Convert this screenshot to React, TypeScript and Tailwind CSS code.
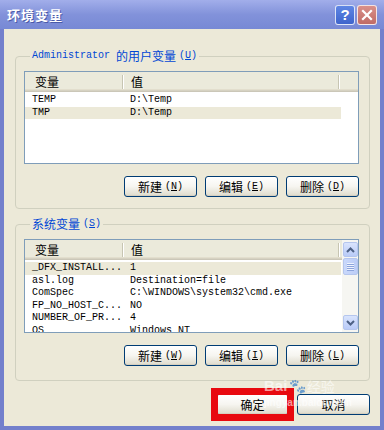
// 环境变量 dialog (Windows XP style)
const mono = "font-['Liberation_Mono','DejaVu_Sans_Mono',monospace] text-[10px]";
const cjk = "font-['Noto_Sans_CJK_SC','Noto_Sans',sans-serif]";

const USER_VARS = [
  { name: "TEMP", value: "D:\\Temp" },
  { name: "TMP", value: "D:\\Temp", selected: true },
];

const SYS_VARS = [
  { name: "_DFX_INSTALL...", value: "1", selected: true },
  { name: "asl.log", value: "Destination=file" },
  { name: "ComSpec", value: "C:\\WINDOWS\\system32\\cmd.exe" },
  { name: "FP_NO_HOST_C...", value: "NO" },
  { name: "NUMBER_OF_PR...", value: "4" },
  { name: "OS", value: "Windows_NT" },
];

function Mnemonic({ k }: { k: string }) {
  return (
    <span className={`${mono} ml-[3px] leading-none`}>
      (<span className="underline underline-offset-[1px]">{k}</span>)
    </span>
  );
}

function XpButton({ label, k }: { label: string; k?: string }) {
  return (
    <button className="flex h-[21px] w-[73px] items-center justify-center rounded-[3px] border border-[#003c74] bg-gradient-to-b from-white via-[#f6f5f0] to-[#dedbcc] text-[12px] leading-none text-black shadow-[inset_0_-1px_0_#d6d0c0]">
      <span className={`${cjk} leading-none`}>{label}</span>
      {k && <Mnemonic k={k} />}
    </button>
  );
}

function Divider() {
  return <span className="h-[14px] w-[2px] border-l border-r border-l-[#c7c5b2] border-r-white" />;
}

function ListHeader() {
  return (
    <div className="flex h-[20px] shrink-0 items-center bg-[#ebeadb] shadow-[inset_0_-1px_0_#cbc7b8,inset_0_-2px_0_#d6d2c2,inset_0_-3px_0_#e2decd]">
      <span className={`${cjk} w-[97px] pl-[10px] text-[12px] leading-[20px] text-black`}>变量</span>
      <Divider />
      <span className={`${cjk} w-[214px] pl-[7px] text-[12px] leading-[20px] text-black`}>值</span>
      <Divider />
    </div>
  );
}

function Rows({ rows }: { rows: { name: string; value: string; selected?: boolean }[] }) {
  return (
    <div className="flex flex-col pt-[2px]">
      {rows.map((r) => (
        <div
          key={r.name}
          className={`flex h-[12.5px] w-[316px] shrink-0 items-center ${mono} leading-[12.5px] text-black ${
            r.selected ? "bg-[#ece9d8]" : ""
          }`}
        >
          <span className="w-[99px] whitespace-pre pl-[7px]">{r.name}</span>
          <span className="whitespace-pre pl-[6px]">{r.value}</span>
        </div>
      ))}
    </div>
  );
}

function ScrollBtn({ up }: { up?: boolean }) {
  return (
    <div className="flex h-[15px] w-[15px] shrink-0 items-center justify-center rounded-[2px] border border-[#b5c6ee] bg-gradient-to-b from-[#d9e4fd] to-[#b9cbf7]">
      <svg width="9" height="6" viewBox="0 0 9 6">
        <path
          d={up ? "M1 5 L4.5 1.5 L8 5" : "M1 1 L4.5 4.5 L8 1"}
          fill="none"
          stroke="#4d6185"
          strokeWidth="2"
        />
      </svg>
    </div>
  );
}

function Scrollbar() {
  return (
    <div className="flex w-[16px] shrink-0 flex-col items-center bg-[#f6f6f2] py-[2px]">
      <ScrollBtn up />
      <div className="mt-[1px] flex h-[17px] w-[15px] flex-col items-center justify-center gap-[1px] rounded-[2px] border border-[#b5c6ee] bg-gradient-to-r from-[#c9d8fb] to-[#bccdf7]">
        {[0, 1, 2, 3].map((i) => (
          <span key={i} className="h-[1px] w-[7px] bg-[#eef3fe] shadow-[0_1px_0_#8ca4dc]" />
        ))}
      </div>
      <div className="flex-1" />
      <ScrollBtn />
    </div>
  );
}

function Group({
  title,
  children,
  className,
}: {
  title: React.ReactNode;
  children: React.ReactNode;
  className?: string;
}) {
  return (
    <fieldset className={`rounded-[4px] border border-[#d0d0bf] pl-[8px] pr-[10px] ${className || ""}`}>
      <legend className="ml-[6px] flex h-[14px] items-center overflow-visible px-[2px] text-[12px] leading-none text-[#0046d5]">
        {title}
      </legend>
      {children}
    </fieldset>
  );
}

export default function App() {
  return (
    <div className="relative flex h-[430px] w-[384px] flex-col overflow-hidden bg-[#7380cc]">
      {/* title bar */}
      <div className="flex h-[29px] shrink-0 items-center bg-gradient-to-b from-[#a2aeea] via-[#8292da] to-[#7789d5] pl-[7px] pr-[7px]">
        <span className={`${cjk} text-[13px] font-bold tracking-[1px] text-white [text-shadow:1px_1px_0_#4a5aa8]`}>
          环境变量
        </span>
        <div className="ml-auto flex gap-[2px]">
          <div className="flex h-[20px] w-[20px] items-center justify-center rounded-[3px] border border-white/80 bg-gradient-to-b from-[#5f86e4] to-[#3e64cc]">
            <span className="font-['Liberation_Sans',sans-serif] text-[15px] font-bold leading-none text-white">?</span>
          </div>
          <div className="flex h-[20px] w-[20px] items-center justify-center rounded-[3px] border border-white/80 bg-gradient-to-b from-[#d9908a] to-[#c06c66]">
            <svg width="12" height="12" viewBox="0 0 12 12">
              <path d="M2 2 L10 10 M10 2 L2 10" stroke="white" strokeWidth="2.2" strokeLinecap="square" />
            </svg>
          </div>
        </div>
      </div>

      {/* client area */}
      <div className="mx-[4px] mb-[4px] flex flex-1 flex-col bg-[#ece9d8] pl-[11px] pr-[10px]">
        <Group
          className="mt-[20px] pb-[11px]"
          title={
            <>
              <span className={`${mono} leading-none`}>Administrator</span>
              <span className={`${cjk} ml-[6px] leading-none`}>的用户变量</span>
              <Mnemonic k="U" />
            </>
          }
        >
          <div className="mt-[8px] flex h-[93px] flex-col overflow-hidden border border-[#7f9db9] bg-white">
            <ListHeader />
            <Rows rows={USER_VARS} />
          </div>
          <div className="mt-[12px] flex justify-end gap-[8px]">
            <XpButton label="新建" k="N" />
            <XpButton label="编辑" k="E" />
            <XpButton label="删除" k="D" />
          </div>
        </Group>

        <Group
          className="mt-[8px] pb-[14px]"
          title={
            <>
              <span className={`${cjk} leading-none`}>系统变量</span>
              <Mnemonic k="S" />
            </>
          }
        >
          <div className="mt-[8px] flex h-[94px] overflow-hidden border border-[#7f9db9] bg-white">
            <div className="flex flex-1 flex-col overflow-hidden">
              <ListHeader />
              <Rows rows={SYS_VARS} />
            </div>
            <Scrollbar />
          </div>
          <div className="mt-[12px] flex justify-end gap-[8px]">
            <XpButton label="新建" k="W" />
            <XpButton label="编辑" k="I" />
            <XpButton label="删除" k="L" />
          </div>
        </Group>

        <div className="mt-[13px] flex justify-end gap-[8px]">
          <div className="relative">
            <XpButton label="确定" />
            <div className="pointer-events-none absolute -bottom-[6px] -left-[5px] -right-[5px] -top-[6px] border-[7px] border-[#e8090f]" />
          </div>
          <XpButton label="取消" />
        </div>
      </div>

      {/* baidu watermark */}
      <div className="pointer-events-none absolute left-[264px] top-[378px] flex flex-col text-white/60">
        <div className="flex items-end">
          <span className="font-['Liberation_Sans',sans-serif] text-[15px] font-bold leading-none">Bai</span>
          <span className="ml-[2px] text-[14px] leading-none">🐾</span>
          <span className={`${cjk} text-[14px] leading-none`}>经验</span>
        </div>
        <span className="mt-[5px] font-['Liberation_Sans',sans-serif] text-[10px] font-bold leading-none">jingyan.baidu.com</span>
      </div>
    </div>
  );
}
